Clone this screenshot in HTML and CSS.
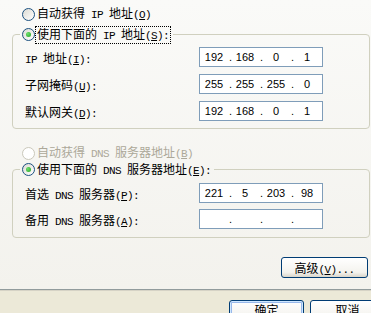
FILE: index.html
```html
<!DOCTYPE html>
<html>
<head>
    <title>Internet 协议 (TCP/IP) 属性</title>
    <link rel="stylesheet" href="styles.css">
</head>
<body>
    <div class="tab-page">
        <!-- IP address -->
        <div class="radio-row">
            <span class="radio"></span>
            <span class="label">自动获得<span class="en"> IP </span>地址<span class="en">(<u>O</u>)</span></span>
        </div>

        <fieldset class="group ip-group">
            <legend>
                <span class="radio checked"></span>
                <span class="label focus">使用下面的<span class="en"> IP </span>地址<span class="en">(<u>S</u>):</span></span>
            </legend>
            <div class="field-row">
                <span class="field-label"><span class="en">IP </span>地址<span class="en">(<u>I</u>):</span></span>
                <div class="ip-box">
                    <span class="seg">192</span><span class="dot">.</span><span class="seg">168</span><span class="dot">.</span><span class="seg">0</span><span class="dot">.</span><span class="seg">1</span>
                </div>
            </div>
            <div class="field-row">
                <span class="field-label">子网掩码<span class="en">(<u>U</u>):</span></span>
                <div class="ip-box">
                    <span class="seg">255</span><span class="dot">.</span><span class="seg">255</span><span class="dot">.</span><span class="seg">255</span><span class="dot">.</span><span class="seg">0</span>
                </div>
            </div>
            <div class="field-row">
                <span class="field-label">默认网关<span class="en">(<u>D</u>):</span></span>
                <div class="ip-box">
                    <span class="seg">192</span><span class="dot">.</span><span class="seg">168</span><span class="dot">.</span><span class="seg">0</span><span class="dot">.</span><span class="seg">1</span>
                </div>
            </div>
        </fieldset>

        <!-- DNS servers -->
        <div class="radio-row dns-auto">
            <span class="radio disabled"></span>
            <span class="label disabled-text">自动获得<span class="en"> DNS </span>服务器地址<span class="en">(<u>B</u>)</span></span>
        </div>

        <fieldset class="group dns-group">
            <legend>
                <span class="radio checked"></span>
                <span class="label">使用下面的<span class="en"> DNS </span>服务器地址<span class="en">(<u>E</u>):</span></span>
            </legend>
            <div class="field-row">
                <span class="field-label">首选<span class="en"> DNS </span>服务器<span class="en">(<u>P</u>):</span></span>
                <div class="ip-box">
                    <span class="seg">221</span><span class="dot">.</span><span class="seg">5</span><span class="dot">.</span><span class="seg">203</span><span class="dot">.</span><span class="seg">98</span>
                </div>
            </div>
            <div class="field-row">
                <span class="field-label">备用<span class="en"> DNS </span>服务器<span class="en">(<u>A</u>):</span></span>
                <div class="ip-box">
                    <span class="seg"></span><span class="dot">.</span><span class="seg"></span><span class="dot">.</span><span class="seg"></span><span class="dot">.</span><span class="seg"></span>
                </div>
            </div>
        </fieldset>

        <div class="advanced-row">
            <button class="xp-button advanced">高级<span class="en">(<u>V</u>)...</span></button>
        </div>
    </div>

    <!-- Dialog buttons -->
    <div class="dialog-buttons">
        <button class="xp-button default">确定</button>
        <button class="xp-button">取消</button>
    </div>
</body>
</html>
```

FILE: styles.css
```css
body {
    margin: 0;
    width: 371px;
    height: 313px;
    overflow: hidden;
    background-color: #ece9d8;
    font-family: "Noto Sans CJK SC", sans-serif;
    font-size: 12px;
    color: #000;
}

/* SimSun-like latin run: 6px per character */
.en {
    font-family: "Liberation Mono", monospace;
    font-size: 11px;
    letter-spacing: -0.6px;
    white-space: pre;
}

.tab-page {
    height: 290px;
    box-sizing: border-box;
    padding-top: 6px;
    background: linear-gradient(#fafaf8, #f3f2ed);
    border-bottom: 1px solid #919b9c;
}

.radio-row {
    display: flex;
    align-items: center;
    height: 16px;
    margin-left: 22px;
}

.radio {
    display: flex;
    align-items: center;
    justify-content: center;
    flex-shrink: 0;
    width: 13px;
    height: 13px;
    box-sizing: border-box;
    margin-right: 2px;
    border: 1px solid #1c5180;
    border-radius: 50%;
    background: linear-gradient(135deg, #dcdbd3, #ffffff);
}

.radio.checked::after {
    content: "";
    width: 5px;
    height: 5px;
    border-radius: 50%;
    background: radial-gradient(circle at 35% 35%, #6ee06e, #21a121);
}

.radio.disabled {
    border-color: #cac8bb;
    background: #fff;
}

.label {
    line-height: 14px;
    white-space: nowrap;
}

.label.focus {
    outline: 1px dotted #000;
    padding: 0 1px;
    margin-left: -1px;
}

.disabled-text {
    color: #aca899;
}

.group {
    margin: 5px 1px 0 12px;
    padding: 0 0 7px 12px;
    border: 1px solid #d0d0bf;
    border-radius: 4px;
    min-width: 0;
}

.group legend {
    display: flex;
    align-items: center;
    height: 15px;
    margin-left: -5px;
    padding: 0 3px 0 2px;
}

.dns-auto {
    margin-top: 16px;
}

.dns-group {
    margin-top: 1px;
    padding-bottom: 8px;
}

.field-row {
    display: flex;
    align-items: center;
    margin-top: 7px;
}

.ip-group .field-row:first-of-type {
    margin-top: 5px;
}

.dns-group .field-row {
    margin-top: 6px;
}

.field-label {
    width: 174px;
    white-space: nowrap;
}

.ip-box {
    display: flex;
    align-items: center;
    width: 124px;
    height: 20px;
    box-sizing: border-box;
    padding-left: 1px;
    border: 1px solid #7f9db9;
    background-color: #fff;
    font-family: "Liberation Sans", sans-serif;
    font-size: 11px;
}

.seg {
    width: 26px;
    text-align: center;
}

.dot {
    width: 5px;
    text-align: right;
}

.xp-button {
    height: 23px;
    box-sizing: border-box;
    padding: 0;
    border: 1px solid #003c74;
    border-radius: 3px;
    background: linear-gradient(#ffffff, #f4f3ee 75%, #d9d5ca);
    font-family: "Noto Sans CJK SC", sans-serif;
    font-size: 12px;
    color: #000;
}

.advanced-row {
    display: flex;
    justify-content: flex-end;
    margin-top: 19px;
    padding-right: 3px;
}

.xp-button.advanced {
    width: 87px;
    height: 21px;
}

.dialog-buttons {
    display: flex;
    gap: 6px;
    padding: 9px 0 0 229px;
    border-top: 1px solid #d6d3c6;
}

.dialog-buttons .xp-button {
    width: 75px;
    flex-shrink: 0;
    padding-bottom: 6px;
}

.xp-button.default {
    box-shadow: inset 0 0 0 1px #cee7ff, inset 0 0 0 2px #98b8ea;
}
```
